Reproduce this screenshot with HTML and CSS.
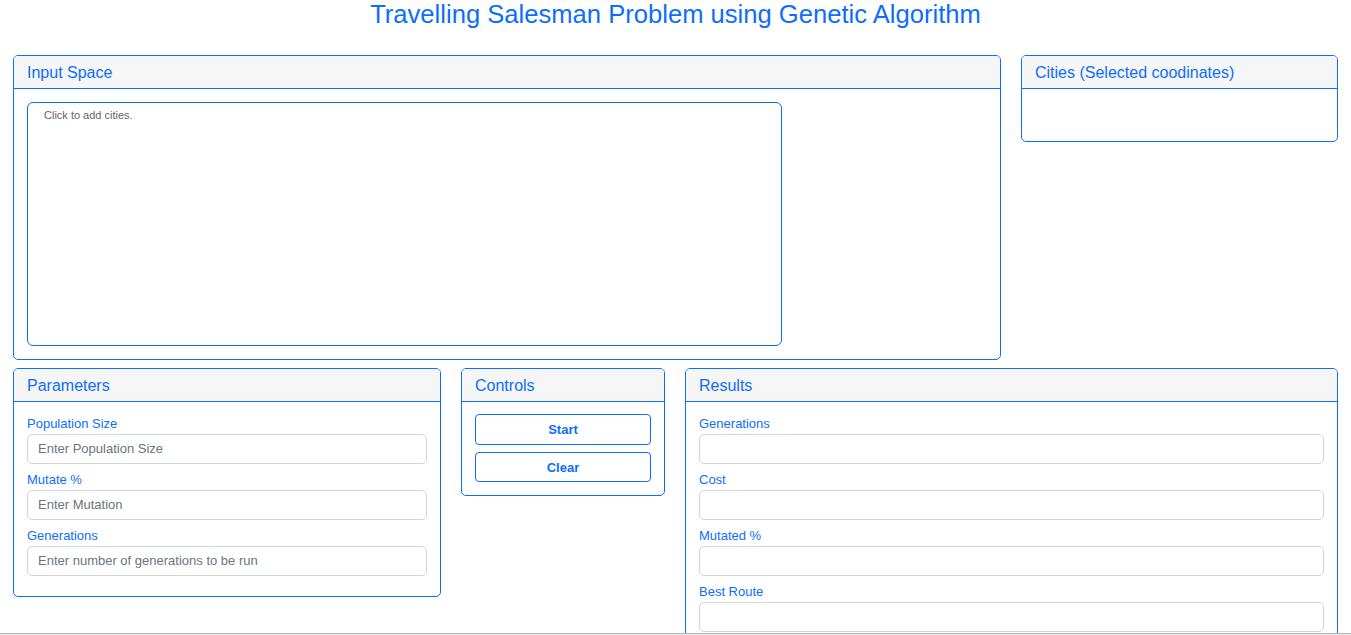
FILE: index.html
```html
<!DOCTYPE html>
<html>
<head>
<meta charset="utf-8">
<link rel="stylesheet" href="styles.css">
</head>
<body>
<h1 class="title">Travelling Salesman Problem using Genetic Algorithm</h1>
<div class="row top-row">
  <div class="card card-input">
    <div class="card-header">Input Space</div>
    <div class="card-body">
      <div class="canvas"><span class="hint">Click to add cities.</span></div>
    </div>
  </div>
  <div class="card card-cities">
    <div class="card-header">Cities (Selected coodinates)</div>
    <div class="card-body cities-body"></div>
  </div>
</div>
<div class="row bottom-row">
  <div class="card card-params">
    <div class="card-header">Parameters</div>
    <div class="card-body form-body">
      <label class="lbl">Population Size</label>
      <input class="field" placeholder="Enter Population Size">
      <label class="lbl">Mutate %</label>
      <input class="field" placeholder="Enter Mutation">
      <label class="lbl">Generations</label>
      <input class="field" placeholder="Enter number of generations to be run">
    </div>
  </div>
  <div class="card card-controls">
    <div class="card-header">Controls</div>
    <div class="card-body controls-body">
      <button class="btn">Start</button>
      <button class="btn">Clear</button>
    </div>
  </div>
  <div class="card card-results">
    <div class="card-header">Results</div>
    <div class="card-body form-body">
      <label class="lbl">Generations</label>
      <input class="field">
      <label class="lbl">Cost</label>
      <input class="field">
      <label class="lbl">Mutated %</label>
      <input class="field">
      <label class="lbl">Best Route</label>
      <input class="field">
    </div>
  </div>
</div>
<div class="bottom-line"></div>
</body>
</html>
```

FILE: styles.css
```css
* { box-sizing: border-box; }
html, body { margin: 0; padding: 0; overflow: hidden; height: 635px; }
body {
  font-family: "Liberation Sans", Arial, sans-serif;
  color: #0d6efd;
  background: #fff;
  padding: 0 13px 0 13px;
}
.title {
  margin: 0;
  padding-top: 0;
  height: 55px;
  text-align: center;
  font-weight: normal;
  font-size: 25.6px;
  line-height: 29px;
  color: #0d6efd;
}
.row { display: flex; gap: 20px; align-items: flex-start; }
.bottom-row { margin-top: 8px; }
.card {
  border: 1px solid #0d6efd;
  border-radius: 5px;
  background: #fff;
  overflow: hidden;
}
.card-header {
  background: #f6f6f6;
  border-bottom: 1px solid #0d6efd;
  height: 33px;
  padding: 0 13px;
  font-size: 16px;
  line-height: 33px;
}
.card-input { width: 988px; height: 305px; }
.card-cities { flex: 1; height: 87px; }
.card-body { padding: 13px; }
.canvas {
  width: 755px;
  height: 244px;
  border: 1px solid #0d6efd;
  border-radius: 6px;
  padding: 2px 16px;
}
.hint { font-size: 11px; color: #666; }
.card-params { width: 428px; }
.card-controls { width: 204px; height: 128px; }
.card-results { flex: 1; height: 300px; }
.form-body { display: flex; flex-direction: column; padding: 14px 13px 20px; }
.lbl { font-size: 13px; line-height: 15px; margin: 8px 0 3px; }
.lbl:first-child { margin-top: 0; }
.field {
  height: 30px;
  border: 1px solid #ced4da;
  border-radius: 5px;
  padding: 0 10px 1px;
  font-family: "Liberation Sans", Arial, sans-serif;
  font-size: 13px;
  color: #333;
  outline: none;
}
.field::placeholder { color: #6c757d; }
.controls-body { display: flex; flex-direction: column; gap: 7px; padding: 12px 13px; }
.btn {
  height: 31px;
  border: 1px solid #0d6efd;
  border-radius: 4px;
  background: #fff;
  color: #0d6efd;
  font-family: "Liberation Sans", Arial, sans-serif;
  font-size: 13px;
  font-weight: bold;
}
.btn + .btn { height: 30px; }
.bottom-line {
  position: fixed;
  left: 0; right: 0; bottom: 0;
  height: 2px;
  background: #b5b5b5;
  border-bottom: 1px solid #e6e6e6;
}
```
